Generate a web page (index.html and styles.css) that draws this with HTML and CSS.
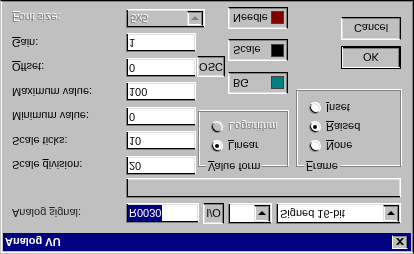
FILE: index.html
```html
<!DOCTYPE html>
<html>
<head>
<link rel="stylesheet" href="styles.css">
</head>
<body>

<div class="window">
  <div class="window_inner">

    <div class="titlebar">
      <span class="title">Analog VU</span>
      <span class="close_btn">
        <svg width="8" height="7" viewBox="0 0 8 7"><path d="M0 0h2l2 2 2-2h2L5 3.5 8 7H6L4 5 2 7H0l3-3.5z" fill="#000"/></svg>
      </span>
    </div>

    <div class="dialog">
      <div class="signal_row">
        <span class="label signal_label">Analog <u>s</u>ignal:</span>
        <div class="edit signal_edit"><span class="selected">R0030</span></div>
        <div class="button io_btn">I/O</div>
        <div class="combo small_combo">
          <span class="combo_text"></span>
          <span class="drop"><span class="arrow"></span></span>
        </div>
        <div class="combo type_combo">
          <span class="combo_text">Signed 16-bit</span>
          <span class="drop"><span class="arrow"></span></span>
        </div>
      </div>

      <div class="status_box"></div>

      <div class="main">
        <div class="fields">
          <span class="label">Scale <u>d</u>ivision:</span>
          <div class="edit">20</div>
          <span class="label">Scale ticks:</span>
          <div class="edit">10</div>
          <span class="label">Minimum value:</span>
          <div class="edit">0</div>
          <span class="label">Maximum value:</span>
          <div class="edit">100</div>
          <span class="label"><u>O</u>ffset:</span>
          <div class="edit">0</div>
          <span class="label"><u>G</u>ain:</span>
          <div class="edit">1</div>
          <span class="label disabled"><u>F</u>ont size:</span>
          <div class="combo font_combo off">
            <span class="combo_text">5x5</span>
            <span class="drop"><span class="arrow"></span></span>
          </div>
        </div>

        <div class="middle">
          <div class="group value_group">
            <span class="group_label"><u>V</u>alue form</span>
            <div class="radio_row"><span class="radio checked"></span><u>L</u>inear</div>
            <div class="radio_row disabled"><span class="radio off"></span>Logarithm</div>
          </div>
          <div class="color_buttons">
            <div class="button osc_btn">OSC</div>
            <div class="button color_btn">BG <span class="swatch" style="background-color: #008080"></span></div>
            <div class="button color_btn">Scale <span class="swatch" style="background-color: #000000"></span></div>
            <div class="button color_btn">Needle <span class="swatch" style="background-color: #800000"></span></div>
          </div>
        </div>

        <div class="right">
          <div class="group frame_group">
            <span class="group_label"><u>F</u>rame</span>
            <div class="radio_row"><span class="radio"></span><u>N</u>one</div>
            <div class="radio_row"><span class="radio checked"></span><u>R</u>aised</div>
            <div class="radio_row"><span class="radio"></span><u>I</u>nset</div>
          </div>
          <div class="button ok_btn">OK</div>
          <div class="button cancel_btn">Cancel</div>
        </div>
      </div>
    </div>

  </div>
</div>

</body>
</html>
```

FILE: styles.css
```css
body {
  margin: 0;
  background-color: #c0c0c0;
  font-family: "Liberation Sans", Arial, sans-serif;
  font-size: 11px;
  color: #000;
}

/* the whole shot is upside down, so the window is flipped */
.window {
  width: 414px;
  height: 254px;
  box-sizing: border-box;
  border: 1px solid;
  border-color: #c0c0c0 #000 #000 #c0c0c0;
  transform: scaleY(-1);
  overflow: hidden;
}

.window_inner {
  height: 100%;
  box-sizing: border-box;
  border: 1px solid;
  border-color: #fff #808080 #808080 #fff;
  padding: 1px;
}

.titlebar {
  height: 18px;
  background-color: #000080;
  color: #fff;
  font-weight: bold;
  display: flex;
  align-items: center;
  justify-content: space-between;
  padding: 0 3px 0 2px;
}

.close_btn {
  width: 16px;
  height: 14px;
  box-sizing: border-box;
  background-color: #c0c0c0;
  border: 1px solid;
  border-color: #fff #000 #000 #fff;
  box-shadow: inset -1px -1px 0 #808080;
  display: flex;
  align-items: center;
  justify-content: center;
}

.dialog {
  padding: 9px 10px 0 9px;
}

.label {
  white-space: nowrap;
  align-self: center;
}

.disabled {
  color: #808080;
  text-shadow: 1px 1px 0 #fff;
}

/* sunken white field */
.edit {
  box-sizing: border-box;
  background-color: #fff;
  border: 1px solid;
  border-color: #808080 #fff #fff #808080;
  box-shadow: inset 1px 1px 0 #000, inset -1px -1px 0 #dfdfdf;
  padding: 0 2px;
  line-height: 17px;
  white-space: nowrap;
}

.button {
  box-sizing: border-box;
  background-color: #c0c0c0;
  border: 1px solid;
  border-color: #fff #000 #000 #fff;
  box-shadow: inset -1px -1px 0 #808080, inset 1px 1px 0 #dfdfdf;
  display: flex;
  align-items: center;
  justify-content: center;
}

.combo {
  box-sizing: border-box;
  height: 21px;
  background-color: #fff;
  border: 1px solid;
  border-color: #808080 #fff #fff #808080;
  box-shadow: inset 1px 1px 0 #000, inset -1px -1px 0 #dfdfdf;
  padding: 1px;
  display: flex;
}

.combo_text {
  flex: 1;
  padding-left: 2px;
  line-height: 17px;
  white-space: nowrap;
}

.drop {
  width: 16px;
  box-sizing: border-box;
  background-color: #c0c0c0;
  border: 1px solid;
  border-color: #dfdfdf #000 #000 #dfdfdf;
  box-shadow: inset -1px -1px 0 #808080, inset 1px 1px 0 #fff;
  display: flex;
  align-items: center;
  justify-content: center;
}

.arrow {
  width: 0;
  height: 0;
  border-left: 4px solid transparent;
  border-right: 4px solid transparent;
  border-top: 4px solid #000;
}

.combo.off {
  background-color: #c0c0c0;
  color: #808080;
  text-shadow: 1px 1px 0 #fff;
}

.combo.off .arrow {
  border-top-color: #808080;
}

/* Analog signal row */
.signal_row {
  display: flex;
  align-items: center;
  gap: 4px;
  height: 21px;
}

.signal_label {
  width: 110px;
  color: #222;
}

.signal_edit {
  width: 73px;
  height: 20px;
  padding: 1px 1px;
  line-height: 16px;
}

.selected {
  display: inline-block;
  background-color: #000080;
  color: #fff;
  padding: 0 1px;
  line-height: 16px;
}

.io_btn {
  width: 21px;
  height: 21px;
}

.small_combo {
  width: 44px;
}

.type_combo {
  width: 125px;
}

.status_box {
  margin: 5px 0 0 114px;
  height: 20px;
  box-sizing: border-box;
  border: 1px solid;
  border-color: #808080 #fff #fff #808080;
  box-shadow: inset 1px 1px 0 #000, inset -1px -1px 0 #dfdfdf;
}

/* main area */
.main {
  margin-top: 3px;
  display: grid;
  grid-template-columns: 185px 91px 1fr;
}

.fields {
  display: grid;
  grid-template-columns: 114px 70px;
  grid-auto-rows: 19px;
  row-gap: 5.5px;
}

.font_combo {
  width: 79px;
  height: 19px;
}

.font_combo .combo_text {
  line-height: 15px;
}

.group {
  position: relative;
  box-sizing: border-box;
  border: 1px solid #808080;
  box-shadow: 1px 1px 0 #fff, inset 1px 1px 0 #fff;
  padding: 10px 0 0 12px;
}

.group_label {
  position: absolute;
  top: -7px;
  left: 7px;
  padding: 0 2px;
  background-color: #c0c0c0;
  line-height: 13px;
}

.value_group {
  margin: 8px 0 0 1px;
  height: 56px;
}

.radio_row {
  display: flex;
  align-items: center;
  height: 19px;
  white-space: nowrap;
}

.radio {
  position: relative;
  width: 12px;
  height: 12px;
  box-sizing: border-box;
  border-radius: 50%;
  background-color: #fff;
  border: 1px solid;
  border-color: #808080 #fff #fff #808080;
  box-shadow: inset 1px 1px 0 #000, inset -1px -1px 0 #dfdfdf;
  margin-right: 5px;
}

.radio.off {
  background-color: #c0c0c0;
}

.radio.checked::after {
  content: "";
  position: absolute;
  left: 3px;
  top: 3px;
  width: 4px;
  height: 4px;
  border-radius: 50%;
  background-color: #000;
}

.color_buttons {
  margin-top: 17px;
  display: grid;
  grid-template-columns: 28px 60px;
  grid-auto-rows: 22px;
  column-gap: 3px;
  row-gap: 10.5px;
}

.osc_btn {
  grid-row: 1 / span 2;
  align-self: center;
  height: 21px;
}

.color_btn {
  grid-column: 2;
  justify-content: space-between;
  padding: 0 3px 0 4px;
}

.swatch {
  width: 13px;
  height: 13px;
  box-sizing: border-box;
  border: 1px solid #404040;
}

.right {
  padding-left: 8px;
  display: flex;
  flex-direction: column;
  align-items: flex-end;
}

.frame_group {
  margin-top: 8px;
  width: 105px;
  height: 77px;
}

.ok_btn, .cancel_btn {
  width: 60px;
  height: 23px;
}

.ok_btn {
  margin-top: 21px;
  border: 1px solid #000;
  box-shadow: inset 1px 1px 0 #fff, inset -1px -1px 0 #000, inset -2px -2px 0 #808080;
}

.cancel_btn {
  margin-top: 6px;
}
```
